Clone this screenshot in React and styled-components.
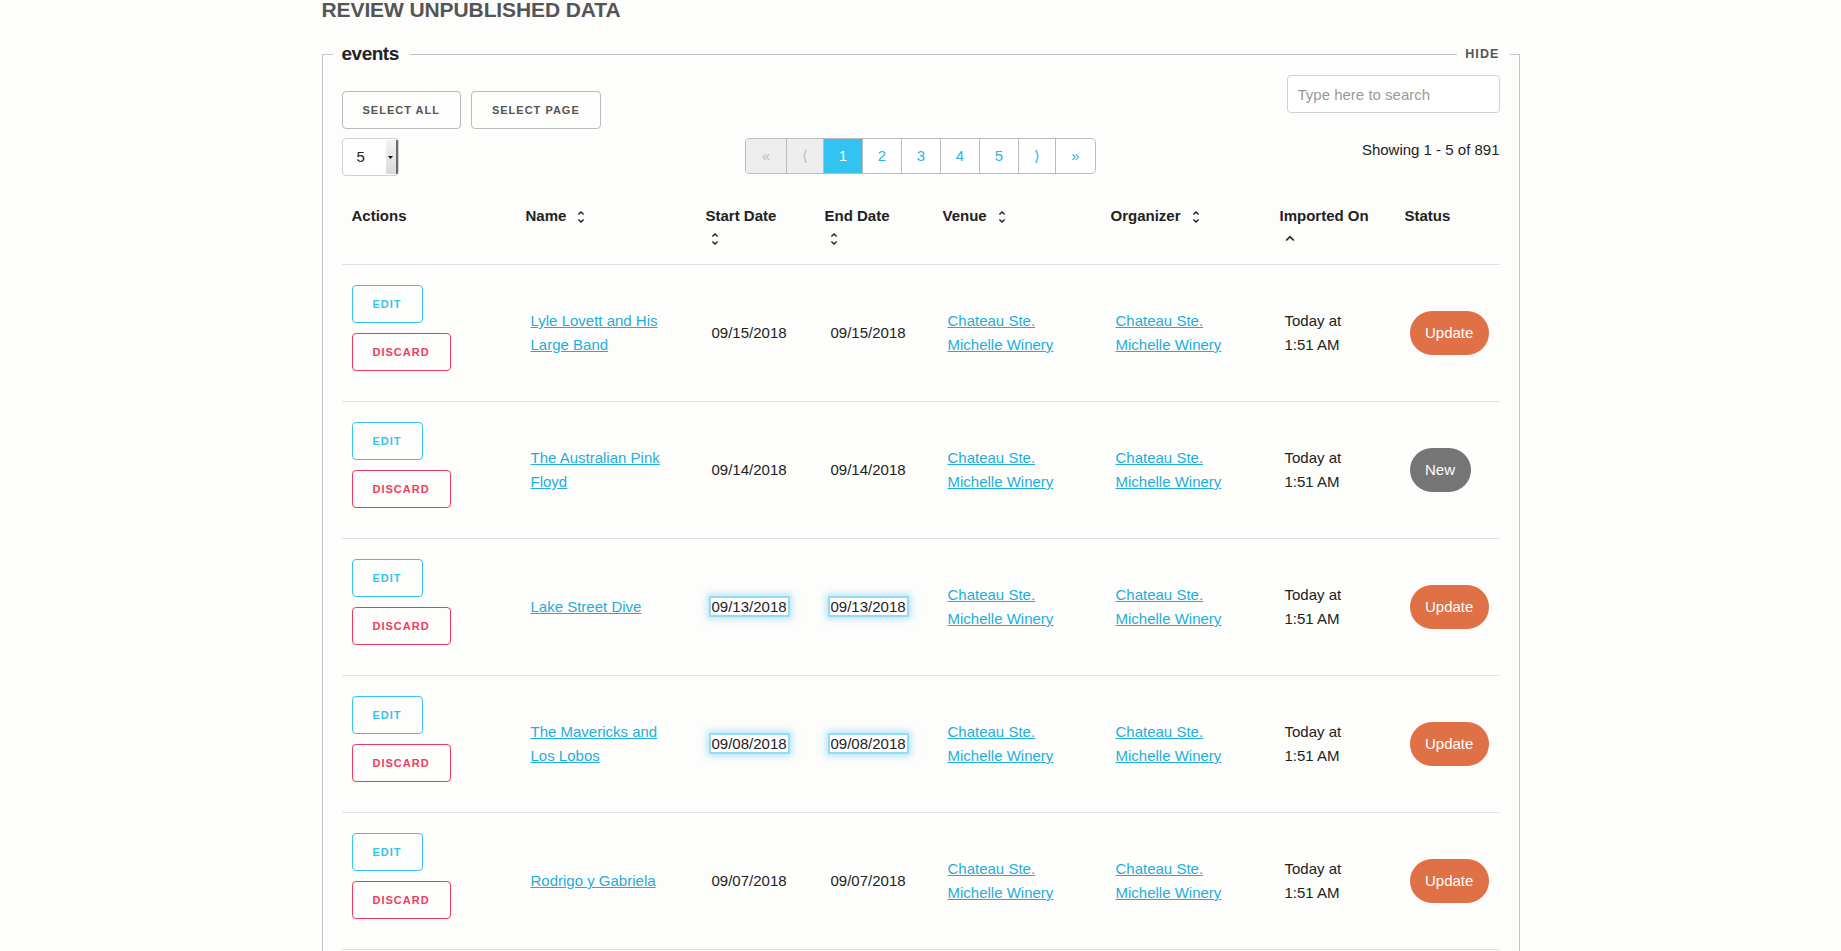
import React from 'react'
import styled, { createGlobalStyle } from 'styled-components'

const GlobalStyle = createGlobalStyle`
  html, body {
    margin: 0;
    padding: 0;
    background: #fdfdfc;
  }
  body {
    font-family: "Liberation Sans", Arial, Helvetica, sans-serif;
    font-size: 15px;
    line-height: 24px;
    color: #222;
  }
  * { box-sizing: border-box; }
`

const rows = [
    { name: 'Lyle Lovett and His Large Band', date: '09/15/2018', status: 'Update' },
    { name: 'The Australian Pink Floyd', date: '09/14/2018', status: 'New' },
    { name: 'Lake Street Dive', date: '09/13/2018', status: 'Update', focused: true },
    { name: 'The Mavericks and Los Lobos', date: '09/08/2018', status: 'Update', focused: true },
    { name: 'Rodrigo y Gabriela', date: '09/07/2018', status: 'Update' },
]

const columns = [
    { label: 'Actions', width: 174 },
    { label: 'Name', width: 180, sort: 'both' },
    { label: 'Start Date', width: 119, sort: 'both', stacked: true },
    { label: 'End Date', width: 118, sort: 'both', stacked: true },
    { label: 'Venue', width: 168, sort: 'both' },
    { label: 'Organizer', width: 169, sort: 'both' },
    { label: 'Imported On', width: 125, sort: 'asc', stacked: true },
    { label: 'Status', width: 105 },
]

const pages = [
    { label: '«', wide: true, disabled: true },
    { label: '⟨', narrow: true, disabled: true },
    { label: '1', active: true },
    { label: '2' },
    { label: '3' },
    { label: '4' },
    { label: '5' },
    { label: '⟩', narrow: true },
    { label: '»', wide: true },
]

const SortIcon = ({ dir }) =>
    dir === 'asc' ? (
        <svg width="10" height="16" viewBox="0 0 10 16">
            <path d="M1.2 9.5 L5 5.7 L8.8 9.5" fill="none" stroke="#222" strokeWidth="1.7" />
        </svg>
    ) : (
        <svg width="8" height="16" viewBox="0 0 8 16">
            <path d="M1.4 5.6 L4 3 L6.6 5.6" fill="none" stroke="#222" strokeWidth="1.4" />
            <path d="M1.4 10.4 L4 13 L6.6 10.4" fill="none" stroke="#222" strokeWidth="1.4" />
        </svg>
    )

const App = () => {
    return (
        <Page>
            <GlobalStyle />
            <Title>Review Unpublished Data</Title>
            <Panel>
                <PanelLegend>
                    <LegendTitle>events</LegendTitle>
                    <LegendRule />
                    <HideLink>Hide</HideLink>
                </PanelLegend>

                <TopBar>
                    <ButtonGroup>
                        <Button>Select All</Button>
                        <Button>Select Page</Button>
                    </ButtonGroup>
                    <Search placeholder="Type here to search" />
                </TopBar>

                <PagerRow>
                    <SizeSelect>
                        <SizeValue>5</SizeValue>
                        <SizeArrow>
                            <svg width="5" height="3" viewBox="0 0 5 3">
                                <polygon points="0,0 5,0 2.5,3" fill="#111" />
                            </svg>
                        </SizeArrow>
                    </SizeSelect>
                    <Pager>
                        {pages.map((p, i) => (
                            <PageItem
                                key={i}
                                $active={p.active}
                                $disabled={p.disabled}
                                $narrow={p.narrow}
                                $wide={p.wide}
                            >
                                {p.label}
                            </PageItem>
                        ))}
                    </Pager>
                    <Showing>Showing 1 - 5 of 891</Showing>
                </PagerRow>

                <Table>
                    <colgroup>
                        {columns.map(c => (
                            <Col key={c.label} $w={c.width} />
                        ))}
                    </colgroup>
                    <thead>
                        <tr>
                            {columns.map(c => (
                                <HeadCell key={c.label}>
                                    {c.label}
                                    {c.sort && (
                                        <SortMark $stacked={c.stacked}>
                                            <SortIcon dir={c.sort} />
                                        </SortMark>
                                    )}
                                </HeadCell>
                            ))}
                        </tr>
                    </thead>
                    <tbody>
                        {rows.map(r => (
                            <tr key={r.name}>
                                <ActionCell>
                                    <Button $tone="primary" $stack>Edit</Button>
                                    <Button $tone="danger" $stack>Discard</Button>
                                </ActionCell>
                                <Cell>
                                    <Link href="#">{r.name}</Link>
                                </Cell>
                                <Cell>
                                    <DateText $focused={r.focused}>{r.date}</DateText>
                                </Cell>
                                <Cell>
                                    <DateText $focused={r.focused}>{r.date}</DateText>
                                </Cell>
                                <Cell>
                                    <Link href="#">Chateau Ste. Michelle Winery</Link>
                                </Cell>
                                <Cell>
                                    <Link href="#">Chateau Ste. Michelle Winery</Link>
                                </Cell>
                                <Cell>
                                    Today at
                                    <br />
                                    1:51 AM
                                </Cell>
                                <Cell>
                                    <StatusPill $kind={r.status}>{r.status}</StatusPill>
                                </Cell>
                            </tr>
                        ))}
                    </tbody>
                </Table>
            </Panel>
        </Page>
    )
}

const Page = styled.div`
  width: 1198px;
  margin: 0 auto;
`

const Title = styled.h4`
  margin: 0 0 22px;
  font-size: 21px;
  line-height: 20px;
  font-weight: 700;
  letter-spacing: -0.1px;
  color: #555;
  text-transform: uppercase;
`

const Panel = styled.fieldset`
  margin: 0;
  min-width: 0;
  padding: 9px 19px 40px;
  border: 1px solid #c4c4c4;
`

const PanelLegend = styled.legend`
  display: flex;
  align-items: center;
  width: calc(100% + 19px);
  margin-left: -9px;
  padding: 0;
  line-height: 24px;
`

const LegendTitle = styled.span`
  padding: 0 11px 0 9px;
  font-size: 19px;
  font-weight: 700;
  letter-spacing: -0.5px;
  color: #222;
`

const LegendRule = styled.span`
  flex: 1;
  border-top: 1px solid #c4c4c4;
`

const HideLink = styled.a`
  padding: 0 10px 0 8px;
  font-size: 12.5px;
  font-weight: 700;
  letter-spacing: 1.1px;
  color: #555;
  text-transform: uppercase;
  cursor: pointer;
`

const TopBar = styled.div`
  display: flex;
  justify-content: space-between;
  align-items: flex-start;
`

const ButtonGroup = styled.div`
  display: flex;
  gap: 10px;
  margin-top: 16px;
`

const toneColor = tone =>
    tone === 'primary' ? '#33c3f0' : tone === 'danger' ? '#f23a60' : '#555'

const Button = styled.button`
  display: ${p => (p.$stack ? 'block' : 'inline-block')};
  height: 38px;
  margin: 0 0 ${p => (p.$stack ? '10px' : '0')};
  padding: 0 20px;
  border: 1px solid ${p => (p.$tone ? toneColor(p.$tone) : '#bbb')};
  border-radius: 4px;
  background: transparent;
  color: ${p => toneColor(p.$tone)};
  font-family: inherit;
  font-size: 11px;
  font-weight: 700;
  letter-spacing: 1px;
  text-transform: uppercase;
  cursor: pointer;
`

const Search = styled.input`
  width: 213px;
  height: 38px;
  padding: 6px 10px;
  border: 1px solid #d1d1d1;
  border-radius: 4px;
  background: #fff;
  font-family: inherit;
  font-size: 15px;
  color: #222;
  &::placeholder {
    color: #999;
  }
`

const PagerRow = styled.div`
  display: grid;
  grid-template-columns: 1fr auto 1fr;
  align-items: start;
  margin-top: 9px;
`

const SizeSelect = styled.div`
  display: flex;
  width: 57px;
  height: 38px;
  border: 1px solid #d1d1d1;
  border-radius: 4px;
  overflow: hidden;
  background: #fff;
`

const SizeValue = styled.span`
  flex: 1;
  padding-left: 14px;
  line-height: 36px;
`

const SizeArrow = styled.span`
  display: flex;
  align-items: center;
  justify-content: center;
  width: 12px;
  margin: 1px 0;
  background: linear-gradient(#f3f3f3, #d9d9d9);
  border-right: 2px solid #6a6a6a;
`

const Pager = styled.ul`
  display: flex;
  height: 36px;
  margin: 0;
  padding: 0;
  list-style: none;
  border: 1px solid #bbb;
  border-radius: 4px;
  overflow: hidden;
`

const PageItem = styled.li`
  display: flex;
  align-items: center;
  justify-content: center;
  width: ${p => (p.$wide ? 40 : p.$narrow ? 37 : 39)}px;
  background: ${p => (p.$active ? '#33c3f0' : p.$disabled ? '#eee' : '#fff')};
  color: ${p => (p.$active ? '#fff' : p.$disabled ? '#bbb' : '#2fb3e3')};
  font-size: 15px;
  cursor: pointer;
  & + & {
    border-left: 1px solid #bbb;
  }
`

const Showing = styled.div`
  justify-self: end;
`

const Table = styled.table`
  width: 100%;
  margin-top: 16px;
  border-collapse: collapse;
  table-layout: fixed;
`

const Col = styled.col`
  width: ${p => p.$w}px;
`

const HeadCell = styled.th`
  padding: 12px 10px;
  text-align: left;
  vertical-align: top;
  font-weight: 700;
  color: #222;
  border-bottom: 1px solid #e1e1e1;
`

const SortMark = styled.span`
  display: ${p => (p.$stacked ? 'block' : 'inline-block')};
  height: ${p => (p.$stacked ? '24px' : 'auto')};
  margin-left: ${p => (p.$stacked ? '5px' : '11px')};
  padding-top: ${p => (p.$stacked ? '3px' : '0')};
  vertical-align: middle;
  svg {
    display: block;
  }
`

const Cell = styled.td`
  padding: 20px 15px;
  vertical-align: middle;
  border-bottom: 1px solid #e1e1e1;
`

const ActionCell = styled(Cell)`
  padding: 20px 10px;
`

const Link = styled.a`
  color: #1eaedb;
  text-decoration: underline;
`

const DateText = styled.span`
  padding: 0 1px;
  background: ${p => (p.$focused ? '#fff' : 'transparent')};
  box-shadow: ${p =>
        p.$focused
            ? '0 0 0 2px rgba(110, 205, 242, 0.55), 0 0 7px 4px rgba(110, 205, 242, 0.5)'
            : 'none'};
`

const StatusPill = styled.span`
  display: inline-flex;
  align-items: center;
  height: 44px;
  padding: 0 15.5px;
  border-radius: 22px;
  background: ${p => (p.$kind === 'New' ? '#757575' : '#e07046')};
  color: #fff;
`

export default App
